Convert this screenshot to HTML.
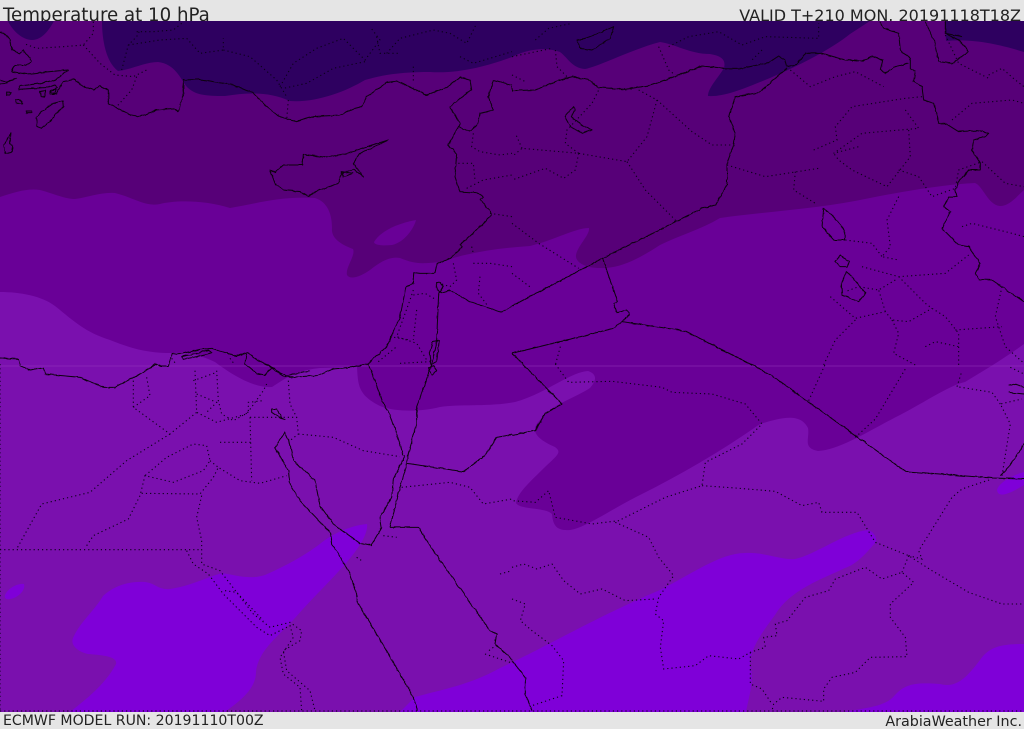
<!DOCTYPE html>
<html><head><meta charset="utf-8"><title>Temperature at 10 hPa</title>
<style>
html,body{margin:0;padding:0;background:#e5e5e5;width:1024px;height:729px;overflow:hidden}
svg{display:block;position:absolute;left:0;top:0}
.s,.d{fill:none;stroke:#000;vector-effect:non-scaling-stroke}
.s{stroke-width:1;stroke-linejoin:round;stroke:#0a0010;filter:url(#w)}
.d{stroke-width:1.1;stroke-dasharray:1.2 3;stroke:#0a0018}
text{font-family:"DejaVu Sans","Liberation Sans",sans-serif;fill:#222}
</style></head><body>
<svg width="1024" height="729" viewBox="0 0 1024 729" xmlns="http://www.w3.org/2000/svg">
<defs><clipPath id="m"><rect x="0" y="21" width="1024" height="691"/></clipPath>
<filter id="w" filterUnits="userSpaceOnUse" x="-200" y="-200" width="2000" height="1600" primitiveUnits="userSpaceOnUse"><feTurbulence type="fractalNoise" baseFrequency="0.06" numOctaves="2" seed="3"/><feDisplacementMap in="SourceGraphic" scale="7" xChannelSelector="R" yChannelSelector="G"/></filter></defs>
<text x="3" y="21" font-size="18.2">Temperature at 10 hPa</text>
<text x="1021" y="21" font-size="16" text-anchor="end">VALID T+210 MON. 20191118T18Z</text>
<g clip-path="url(#m)">
<rect x="0" y="21" width="1024" height="691" fill="#7a10ae"/>
<g fill="#7f00d8">
<path d="M367,524C368,530 364,540 355,552C340,572 315,595 295,618C280,635 258,650 256,672C256,690 238,702 225,712L70,712C85,700 105,685 116,664C118,656 100,655 88,654C78,652 70,645 73,638C80,622 95,610 103,596C115,585 130,581 145,582C155,583 158,590 170,589C190,586 205,578 222,573C235,575 250,580 265,575C285,566 305,556 325,540C340,530 355,525 367,524Z"/>
<path d="M400,712L415,697C440,690 470,685 500,668C540,650 600,615 660,590C690,575 720,553 745,553C765,552 780,560 795,559C815,555 845,532 868,530C875,532 878,540 875,543C865,555 855,565 845,568C820,580 790,590 775,615C760,635 750,650 750,665C755,680 748,700 746,712Z"/>
<path d="M1024,644C1005,644 990,645 980,660C965,680 955,688 940,684C915,682 905,684 895,695C885,708 860,708 845,712L1024,712Z"/>
<path d="M1024,472C1010,476 998,484 997,490C998,498 1008,495 1024,485Z"/>
<path d="M5,595C8,588 18,583 24,584C26,590 18,598 10,599C6,600 4,598 5,595Z"/>
</g>
<path fill="#690097" d="M0,292C20,292 42,296 55,306C75,322 85,332 110,340C135,350 150,353 172,353C190,352 200,355 215,362C235,377 255,388 272,387C290,375 300,370 320,368L357,367C358,385 358,395 380,406C395,412 420,412 440,407C460,404 490,407 515,402C545,394 570,372 588,371C597,374 597,380 590,388C575,398 550,405 540,420C530,430 535,438 555,447C562,452 558,455 545,467C530,482 518,492 516,503C520,510 545,507 552,514C553,525 556,531 570,530C585,528 610,510 640,495C680,475 720,452 760,424C780,418 800,412 808,428C810,438 802,448 818,451C840,450 870,430 900,415C925,402 950,385 965,382C985,370 1005,358 1024,344L1024,180L0,180Z"/>
<path fill="#570078" d="M0,197C15,192 28,188 40,190C55,194 65,199 75,199C90,197 100,192 115,193C135,198 145,207 160,204C175,200 205,200 230,208C255,204 280,196 315,198C328,202 332,215 332,228C331,238 340,244 353,249C356,255 345,268 347,275C350,280 360,277 370,270C380,262 390,256 400,258C415,264 420,264 440,262C470,252 500,248 530,246C555,240 575,228 589,228C590,235 578,245 576,255C575,262 585,268 600,268C620,269 640,258 660,245C680,235 700,230 720,218C760,212 820,209 870,198C910,190 950,184 975,183C983,186 988,205 1000,206C1010,206 1018,195 1024,190L1024,21L0,21Z"/>
<path fill="#690097" d="M374,242C380,232 395,224 416,220C414,228 405,242 392,245C382,246 374,245 374,242Z"/>
<g fill="#2e0060">
<path d="M102,21C102,40 106,62 118,71C130,70 145,62 158,62C175,64 180,78 187,87C195,95 205,96 225,96C250,92 270,92 290,101C315,103 345,92 365,80C385,74 405,72 430,72C460,74 490,65 512,57C525,50 545,46 560,52C568,58 572,68 585,69C600,66 630,50 660,42C675,44 690,54 710,54C722,56 726,60 724,68C718,78 708,88 708,96C725,97 745,88 770,78C800,65 830,50 850,34L870,21Z"/>
<path d="M8,21C12,30 22,40 32,40C42,40 49,30 54,21Z"/>
<path d="M945,21L946,41C975,38 1005,46 1024,52L1024,21Z"/>
</g>
<rect x="0" y="365.5" width="1024" height="1" fill="#9a3cc0" opacity=".45"/>

<!-- quadrant NW -->
<g transform="scale(.33333)">
<path class="d" d="M280,65 L280,100 L250,135 L190,140 L110,145 L70,130M250,135 L300,190 L345,225 L400,230 L440,210M410,230 L395,270 L350,320M365,210 L385,135 L410,110 L420,90M410,95 L460,95 L520,90 L545,70M385,135 L480,120 L560,115 L600,160 L670,150 L670,115M670,150 L750,170 L830,240 L860,290M840,260 L880,190 L950,145 L1030,115 L1095,180 L1140,120 L1110,80M1095,185 L1000,205 L920,250 L850,265M1160,160 L1200,115 L1300,90 L1350,100 L1400,130 L1430,70M1380,170 L1420,190 L1536,155M1130,110 L1140,160 L1200,160M865,300 L860,360M1240,200 L1240,250M1420,400 L1415,440 L1440,455 L1500,465 L1536,460M1375,490 L1420,490 L1425,540M1400,565 L1450,540 L1536,525M1470,640 L1536,650M1415,740 L1420,760M1360,790 L1370,840 L1350,860 L1320,850M1420,790 L1470,790 L1536,800M1440,830 L1435,880 L1465,920M1240,870 L1230,900 L1190,1010 L1250,1030 L1280,1080M1240,885 L1275,880 L1310,900M1170,1010 L1230,1020M1135,1085 L1190,1040M1200,1090 L1290,1085M1250,930 L1240,1020M515,1075 L530,1095M690,1075 L705,1095"/>
<path class="s" d="M0,97 L12,100 L28,115 L35,150 L60,160 L70,150 L90,175 L95,185 L75,195 L45,195 L35,215 L80,222 L150,215 L205,210 L185,225 L165,240 L120,250 L60,258 L55,268 L100,265 L145,262 L165,255 L172,262 L150,275 L170,282 L180,262 L190,245 L220,238 L250,258 L280,270 L300,258 L325,270 L325,310 L360,330 L395,345 L420,350 L470,330 L520,325 L535,335 L550,280 L550,240 L600,238 L700,255 L760,280 L800,320 L840,352 L890,365 L940,350 L1020,345 L1065,325 L1085,320 L1100,290 L1160,248 L1190,243 L1280,285 L1340,262 L1380,232 L1410,240 L1415,270 L1380,295 L1350,322 L1380,370 L1372,385 L1345,435 L1370,460 L1365,530 L1380,575 L1430,578 L1450,590 L1440,600 L1470,630 L1475,645 L1425,695 L1380,735 L1385,742 L1350,775 L1310,792 L1305,820 L1260,820 L1243,818 L1240,850 L1218,860 L1200,950 L1160,1040 L1100,1095"/>
<path class="s" d="M1480,240 L1465,290 L1480,330 L1440,340 L1435,370 L1410,395 L1375,380M1480,240 L1536,255M1316,880 L1350,870 L1410,905 L1505,937 L1536,918M1316,880 L1310,1020 L1295,1095M1308,848 L1322,846 L1330,860 L1320,878 L1312,870 Z M1298,1025 L1318,1020 L1310,1085 L1293,1095 L1288,1060Z"/>
<path class="s" d="M810,510 L825,550 L850,570 L900,575 L925,588 L960,570 L1015,550 L1025,520 L1060,508 L1090,530 L1060,490 L1080,460 L1165,420 L1100,440 L1040,460 L980,472 L910,463 L908,495 L850,495 L825,518 Z M1025,515 L1060,520 L1030,530Z"/>
<path class="s" d="M188,303 L160,310 L125,335 L108,352 L112,380 L125,385 L150,365 L165,345 L190,320Z M33,397 L20,425 L10,435 L15,460 L35,455 L38,440 L30,430 Z M35,210 L45,195 M0,240 L20,245 L50,235 L15,250 L0,252 M20,278 L32,278 L30,285 L20,285Z M120,275 L135,272 L135,290 L122,288Z M45,300 L60,298 L68,310 L50,310Z M80,333 L95,333 L95,338 L80,338Z M150,272 L170,268 L165,282 L150,282Z"/>
</g>

<!-- quadrant NE -->
<g transform="translate(512,0) scale(.33333)">
<path class="d" d="M0,225 L40,245M70,120 L110,85 L180,70M0,170 L120,145M130,150 L135,200 L165,230M440,140 L470,210 L490,225M470,140 L530,110 L620,95 L690,135 L760,110 L920,115 L920,70M750,150 L720,180M380,270 L435,300 L540,395 L600,435 L660,435M435,300 L405,410 L345,485 L200,460 L30,445 L0,470M345,485 L400,570 L490,660M200,460 L190,510 L155,535 L100,505 L0,540M30,445 L10,400M200,460 L160,430 L165,390 L240,310 L260,270M0,670 L80,730 L200,805M0,820 L60,865M645,495 L760,530 L920,505M850,515 L845,570 L910,610M835,210 L895,260 L970,230 L1030,215 L1115,260M905,450 L975,420 L970,380 L1020,320 L1180,295 L1230,290M1180,330 L1220,385 L1050,400 L965,460 L1040,440M1190,390 L1195,470 L1125,560 L1020,510 L980,480 L965,460M1160,510 L1220,530 L1260,590 L1330,565 L1340,510 L1410,485 L1480,550 L1536,560M1320,360 L1380,310 L1500,300 L1536,310M1350,680 L1380,670 L1500,700 L1536,710M1430,225 L1470,205 L1510,240 L1536,260M1300,105 L1340,190 L1430,235M1160,590 L1125,660 L1135,740 L1110,770 L1160,780M1000,720 L1080,730 L1110,770M1050,800 L1160,830 L1300,820 L1370,765M1160,830 L1240,910 L1260,925 L1300,950 L1340,1000 L1340,1095M1150,840 L1100,870 L1040,860 L1000,875M955,890 L1030,955 L1120,935 L1140,960 L1190,965 L1260,925M1120,935 L1100,870M1470,860 L1450,950 L1480,1040 L1536,1090M1330,990 L1470,980M1140,960 L1160,1000 L1145,1060 L1210,1095M1240,1040 L1270,1025 L1340,1040M1030,960 L970,1020 L935,1095M145,1040 L130,1095"/>
<path class="s" d="M0,260 L0,272 L70,270 L130,245 L180,230 L230,240 L260,262 L340,268 L420,255 L500,225 L570,198 L640,205 L690,205 L770,188 L800,168 L820,180 L825,200 L855,193 L880,160 L930,160 L1000,180 L1050,183 L1080,168 L1112,180 L1105,210 L1120,220 L1150,200 L1190,190"/>
<path class="s" d="M1105,65 L1115,85 L1160,100 L1165,150 L1195,175 L1195,205 L1210,215 L1205,245 L1230,260 L1235,300 L1265,310 L1280,370 L1300,370 L1340,395 L1395,392 L1430,400 L1420,410 L1385,420 L1380,450 L1405,490 L1405,510 L1370,510 L1340,545 L1330,570 L1335,590 L1310,590 L1295,620 L1315,635 L1290,685 L1340,735 L1370,740 L1405,790 L1390,820 L1400,838 L1440,840 L1536,905"/>
<path class="s" d="M825,205 L740,278 L670,290 L650,350 L670,400 L665,435 L645,490 L645,555 L610,615 L570,625 L272,775 L0,918M272,775 L316,905 L305,910 L315,938 L345,930 L352,945 L305,985 L0,1060M330,965 L520,993 L720,1095"/>
<path class="s" d="M195,120 L220,115 L260,100 L305,80 L295,115 L240,150 L205,145Z M185,320 L158,350 L175,380 L210,400 L240,390 L215,378 L178,350 L188,330Z M1240,65 L1270,130 L1280,185 L1320,190 L1370,155 L1340,120 L1300,100 L1300,65M1300,100 L1350,110M935,625 L930,680 L965,720 L998,720 L998,690 L960,645Z M968,785 L985,765 L1012,785 L1005,800 L985,800Z M1003,815 L988,850 L990,885 L1040,905 L1060,880 L1020,830Z"/>
</g>

<!-- quadrant SW -->
<g transform="translate(0,364) scale(.33333)">
<path class="d" d="M400,50 L400,130 L510,210 L590,145M400,130 L450,95 L440,40M585,20 L590,145 L650,175 L740,150 L790,80 L800,60M590,90 L650,115 L620,145M650,20 L655,110 L665,150 L700,170 L745,145 L745,115 L790,110M580,50 L650,25M510,210 L380,290 L270,385 L125,420 L50,555M0,557 L600,557M260,545 L280,515 L385,465 L420,395 L435,335 L520,355 L610,320 L630,290 L620,245 L580,240 L500,280 L435,335M425,388 L600,390 L640,340 L655,310 L720,350 L780,358 L860,335M630,290 L655,310M605,395 L590,460 L605,530 L605,600 L660,620 L760,750 L810,790 L870,775 L905,800 L900,830 L850,860 L860,920 L930,980 L945,1040M560,560 L580,600 L625,630 L670,690 L770,790 L810,815 L870,785 L880,820 L840,880 L850,930 L900,970 L905,1040M675,680 L710,685 L790,770M750,160 L755,350M660,235 L755,235M750,160 L890,160 L895,210 L870,230M895,210 L1000,220 L1090,260 L1200,278M865,50 L870,120 L890,160M1205,370 L1350,355 L1410,370 L1450,420 L1536,405M1455,870 L1530,895M1500,630 L1536,620M1480,850 L1460,865M1150,515 L1190,520M1070,580 L1085,590M0,0 L0,1040M0,1041 L1536,1041"/>
<path class="s" d="M1105,0 L1155,130 L1170,150 L1200,240 L1210,275M1225,270 L1215,320 L1200,370 L1170,490M1215,275 L1180,345 L1175,400 L1140,460 L1145,490 L1113,545 L1080,538 L1000,480 L960,425 L945,350 L880,290 L870,240 L855,205 L825,250 L865,320 L870,360 L900,410 L990,505 L995,540 L1010,560 L1050,630 L1070,690 L1070,710 L1160,860 L1240,1000 L1253,1040"/>
<path class="s" d="M1295,0 L1250,130 L1250,180 L1225,270M1285,10 L1300,5 L1310,20 L1295,35Z M1170,490 L1255,490 L1300,560 L1350,630 L1470,800 L1490,810 L1485,840 L1530,880 L1536,890M1536,212 L1490,220 L1455,275 L1390,323 L1222,298M815,135 L830,135 L845,160 L855,168 L830,155 L815,145Z"/>
<path class="s" d="M1100,0 L1050,10 L1000,15 L950,35 L870,40 L830,20 L800,0M470,0 L420,30 L345,70 L310,70 L240,40 L135,30 L130,10 L90,18 L60,5 L55,-15 L0,-18"/>
</g>

<!-- delta coast -->
<g transform="translate(150,340) scale(.33333)">
<path class="s" d="M0,85 L15,70 L35,78 L55,78 L65,42 L100,40 L150,28 L185,25 L225,38 L260,48 L295,38 L315,55 L350,75 L405,110 L440,100 L480,92M95,50 L130,42 L175,30 L185,38 L140,50 L100,58Z M290,40 L285,70 L320,100 L345,105 L362,85"/>
</g>

<!-- quadrant SE -->
<g transform="translate(512,364) scale(.33333)">
<path class="d" d="M130,0 L170,55 L300,52 L450,70 L480,85 L600,90 L700,120 L750,180 L690,240 L580,295 L570,365 L460,400 L320,470 L240,480 L130,460 L110,380 L70,415 L0,410M310,475 L410,520 L440,580 L485,635 L440,700 L430,750 L455,770 L445,850 L455,915 L550,905 L590,875 L680,885 L715,865 L760,850 L755,820 L795,815 L790,780 L825,770 L880,700 L950,680 L970,645 L1060,610 L1110,645 L1170,625 L1205,655 L1135,720 L1135,760 L1180,820 L1185,878 L1075,880 L1030,925 L960,940 L935,975 L935,1012 L810,1000 L785,1020 L780,1040M570,365 L670,372 L790,382 L870,425 L920,415 L930,445 L1035,445 L1090,535 L1190,575 L1260,620 L1370,685 L1470,720 L1536,720M1190,575 L1170,625M1190,575 L1230,585 L1220,560 L1320,400 L1350,375 L1440,345M1470,335 L1495,180 L1465,120 L1530,105M1465,120 L1440,85 L1335,68M1335,68 L1350,20M1030,220 L1090,165 L1180,15M890,110 L940,0M0,610 L35,600 L75,615 L120,600 L155,650 L205,690 L270,675 L340,710 L430,705M0,705 L40,720 L25,770 L60,800 L120,845 L155,890 L150,995 L60,1025M715,865 L715,960 L750,975 L780,1020M1495,10 L1536,30M0,1041 L1536,1041"/>
<path class="s" d="M0,-33 L150,120 L100,147 L70,200 L0,213M715,0 L780,35 L1180,322 L1440,342 L1536,345M1465,335 L1490,310 L1536,240M0,890 L40,940 L40,990 L60,1040M1490,65 L1510,60 L1536,70M1490,85 L1536,90"/>
</g>
</g>
<text x="3" y="725" font-size="14.1">ECMWF MODEL RUN: 20191110T00Z</text>
<text x="1022" y="726" font-size="14.3" text-anchor="end">ArabiaWeather Inc.</text>
</svg>
</body></html>
